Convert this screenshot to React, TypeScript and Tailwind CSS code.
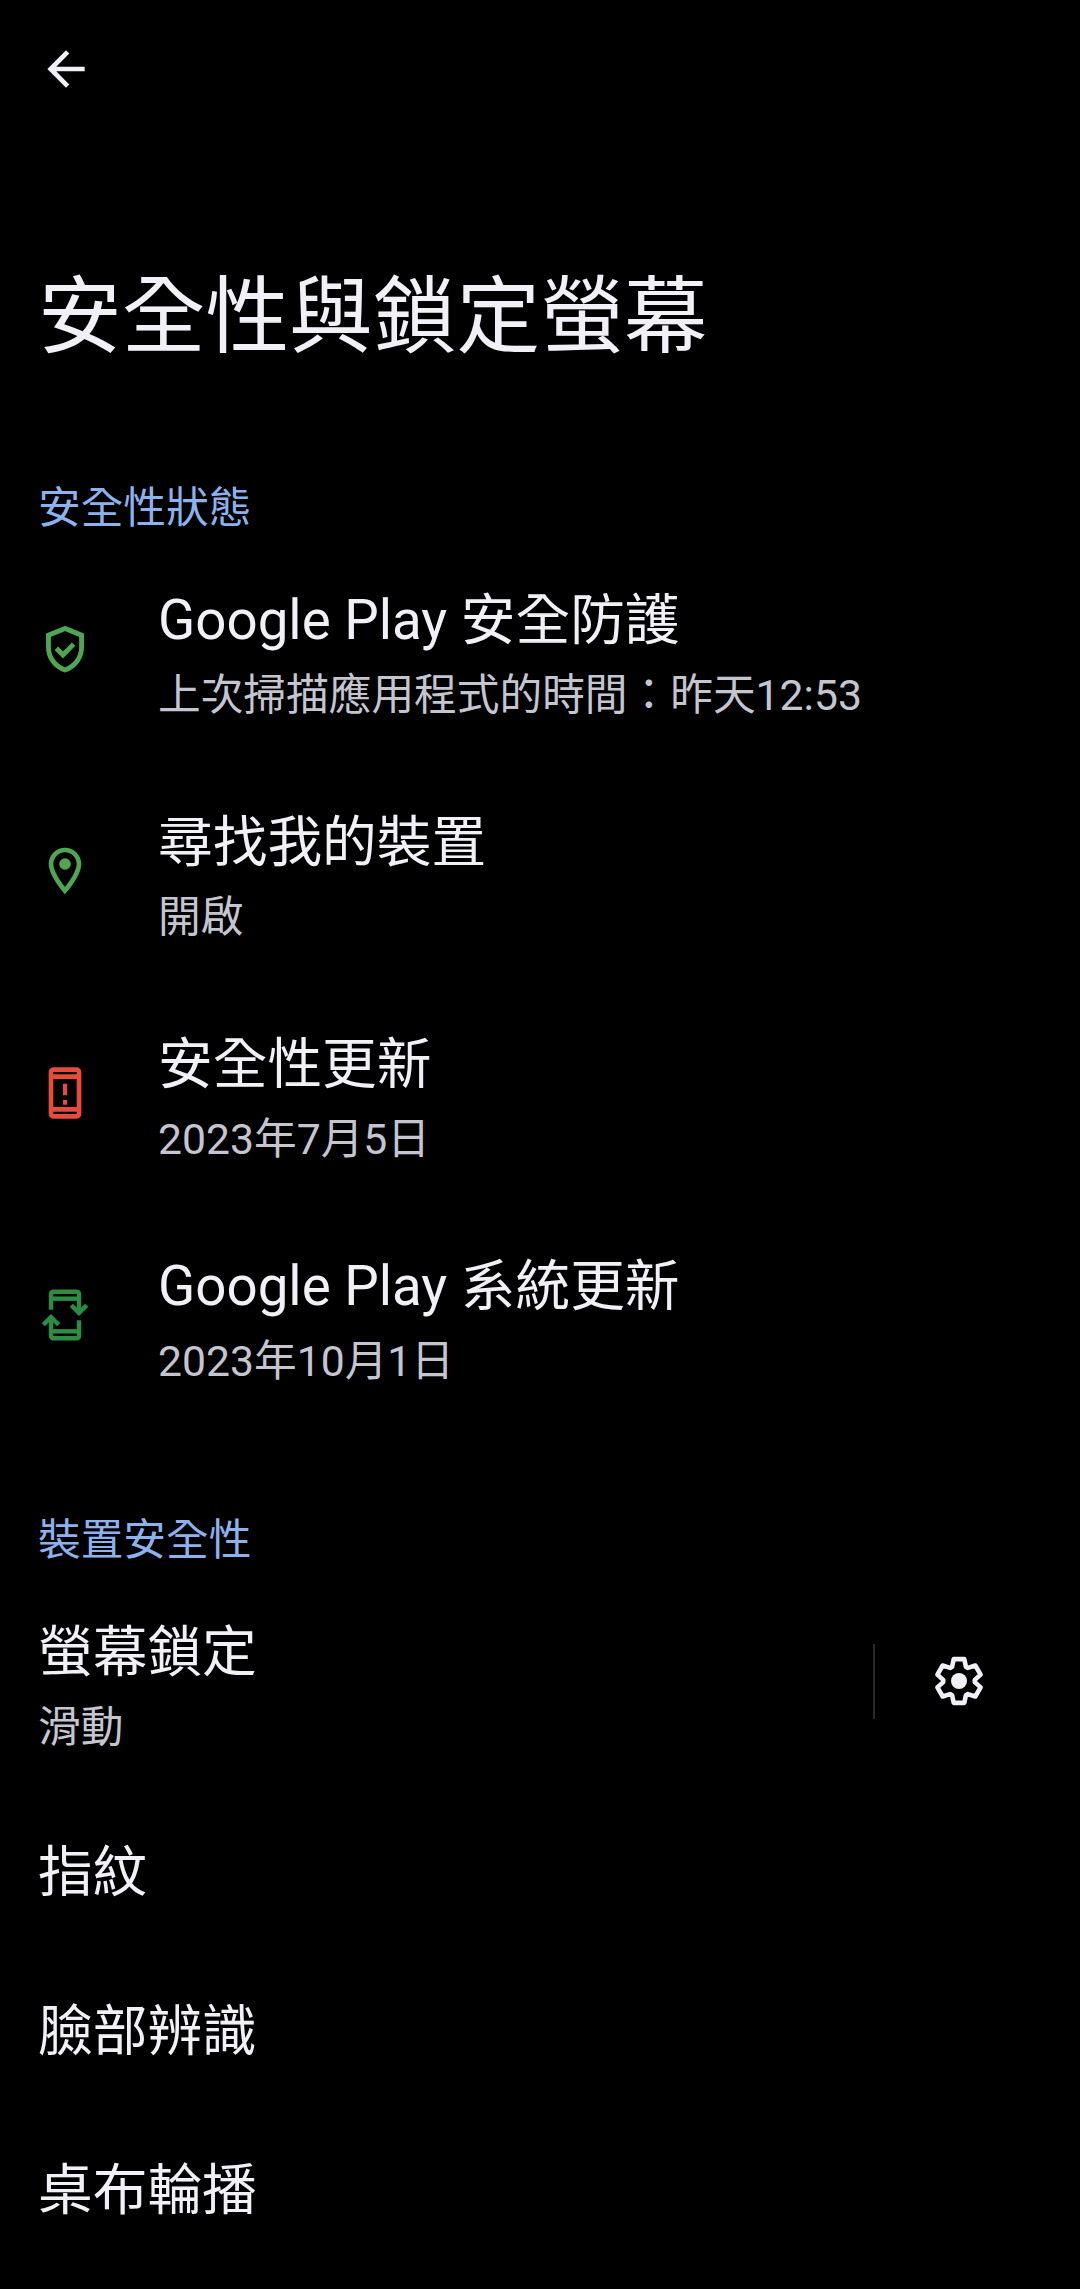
import type { ReactNode } from "react"

interface StatusItem {
  title: string
  summary: string
  icon: ReactNode
}

function BackIcon() {
  return (
    <svg viewBox="0 0 24 24" className="w-14 h-14" fill="currentColor">
      <path d="M20 11H7.83l5.59-5.59L12 4l-8 8 8 8 1.41-1.41L7.83 13H20v-2z" />
    </svg>
  )
}

function ShieldIcon() {
  return (
    <svg viewBox="0 0 24 24" className="w-14 h-14 text-[#4ea652]" fill="none" stroke="currentColor" strokeWidth="2.1">
      <path d="M12 3.2 4.9 6.1v5c0 4.7 2.9 8.4 7.1 9.9 4.2-1.5 7.1-5.2 7.1-9.9v-5z" />
      <path d="M8.3 11.7l2.8 2.9 4.6-4.7" />
    </svg>
  )
}

function PinIcon() {
  return (
    <svg viewBox="0 0 24 24" className="w-14 h-14 text-[#4ea652]" fill="currentColor">
      <path d="M12 2C8.13 2 5 5.13 5 9c0 5.25 7 13 7 13s7-7.75 7-13c0-3.87-3.13-7-7-7zM7 9c0-2.76 2.24-5 5-5s5 2.24 5 5c0 2.88-2.88 7.19-5 9.88C9.92 16.21 7 11.85 7 9z" />
      <circle cx="12" cy="9" r="2.5" />
    </svg>
  )
}

function PhoneAlertIcon() {
  return (
    <svg viewBox="0 0 24 24" className="w-14 h-14 text-[#e84a3c]" fill="currentColor">
      <path
        fillRule="evenodd"
        d="M7 1h10a2 2 0 0 1 2 2v18a2 2 0 0 1-2 2H7a2 2 0 0 1-2-2V3a2 2 0 0 1 2-2zm0 2v1h10V3zm0 3v12h10V6zm0 14v1h10v-1z"
      />
      <path d="M11.1 8h1.8v5h-1.8zM11.1 15h1.8v2h-1.8z" />
    </svg>
  )
}

function PhoneSyncIcon() {
  return (
    <svg viewBox="0 0 24 24" className="w-14 h-14 text-[#2b8d43]" fill="none" stroke="currentColor" strokeWidth="1.9">
      <path d="M6 9.8V3a1 1 0 0 1 1-1h10a1 1 0 0 1 1 1v8" />
      <path d="M6 5h12" />
      <path d="M14.7 7.8 18 11.1l3.3-3.3" />
      <path d="M18 14.2V21a1 1 0 0 1-1 1H7a1 1 0 0 1-1-1v-8" />
      <path d="M6 19h12" />
      <path d="M9.3 16.2 6 12.9l-3.3 3.3" />
    </svg>
  )
}

function GearIcon() {
  return (
    <svg viewBox="-28 -28 56 56" className="w-14 h-14" fill="none" stroke="currentColor" strokeWidth="4.6" strokeLinejoin="round">
      <path d="M-6.9-14.2-5.3-21.9H5.3L6.9-14.2 8.9-13.1 16.3-15.5 21.6-6.4 15.8-1.1V1.1L21.6 6.4 16.3 15.5 8.9 13.1 6.9 14.2 5.3 21.9H-5.3L-6.9 14.2-8.9 13.1-16.3 15.5-21.6 6.4-15.8 1.1V-1.1L-21.6-6.4-16.3-15.5-8.9-13.1z" />
      <circle r="8" fill="currentColor" stroke="none" />
    </svg>
  )
}

const statusItems: StatusItem[] = [
  { title: "Google Play 安全防護", summary: "上次掃描應用程式的時間：昨天12:53", icon: <ShieldIcon /> },
  { title: "尋找我的裝置", summary: "開啟", icon: <PinIcon /> },
  { title: "安全性更新", summary: "2023年7月5日", icon: <PhoneAlertIcon /> },
  { title: "Google Play 系統更新", summary: "2023年10月1日", icon: <PhoneSyncIcon /> },
]

const deviceItems = ["指紋", "臉部辨識", "桌布輪播"]

function SectionHeader({ children }: { children: ReactNode }) {
  return <h2 className="text-[42.7px] leading-[60px] text-[#8cb2ee]">{children}</h2>
}

function RowText({ title, summary }: { title: string; summary: string }) {
  return (
    <div className="pt-10">
      <div className="text-[54.7px] leading-[84px]">{title}</div>
      <div className="text-[42.7px] leading-[66px] text-[#c5c5cf]">{summary}</div>
    </div>
  )
}

export default function App() {
  return (
    <div
      lang="zh-Hant"
      className="w-[1080px] h-[2289px] overflow-hidden bg-black text-[#f2f0f7] whitespace-nowrap font-[Roboto,'Noto_Sans_CJK_TC',sans-serif]"
    >
      <header className="h-[138px] flex items-center pl-[38px]">
        <button aria-label="返回">
          <BackIcon />
        </button>
      </header>

      <h1 className="mt-[117px] pl-[38px] text-[83.7px] leading-[124px]">安全性與鎖定螢幕</h1>

      <section className="mt-[99px]">
        <div className="pl-[38px]">
          <SectionHeader>安全性狀態</SectionHeader>
        </div>
        {statusItems.map((item) => (
          <div key={item.title} className="flex h-[222px] pl-[37px] first-of-type:mt-0">
            <div className="w-[121px] flex items-center">{item.icon}</div>
            <RowText title={item.title} summary={item.summary} />
          </div>
        ))}
      </section>

      <section className="pt-[84px]">
        <div className="pl-[38px]">
          <SectionHeader>裝置安全性</SectionHeader>
        </div>
        <div className="flex h-[222px] justify-between pl-[38px]">
          <RowText title="螢幕鎖定" summary="滑動" />
          <div className="flex items-center">
            <div className="w-0.5 h-[75px] bg-[#2a2a2c]" />
            <button aria-label="設定" className="ml-14 mr-[93px]">
              <GearIcon />
            </button>
          </div>
        </div>
        {deviceItems.map((title) => (
          <div key={title} className="flex h-[159px] items-center pl-[38px] text-[54.7px] leading-[84px]">
            {title}
          </div>
        ))}
      </section>
    </div>
  )
}
